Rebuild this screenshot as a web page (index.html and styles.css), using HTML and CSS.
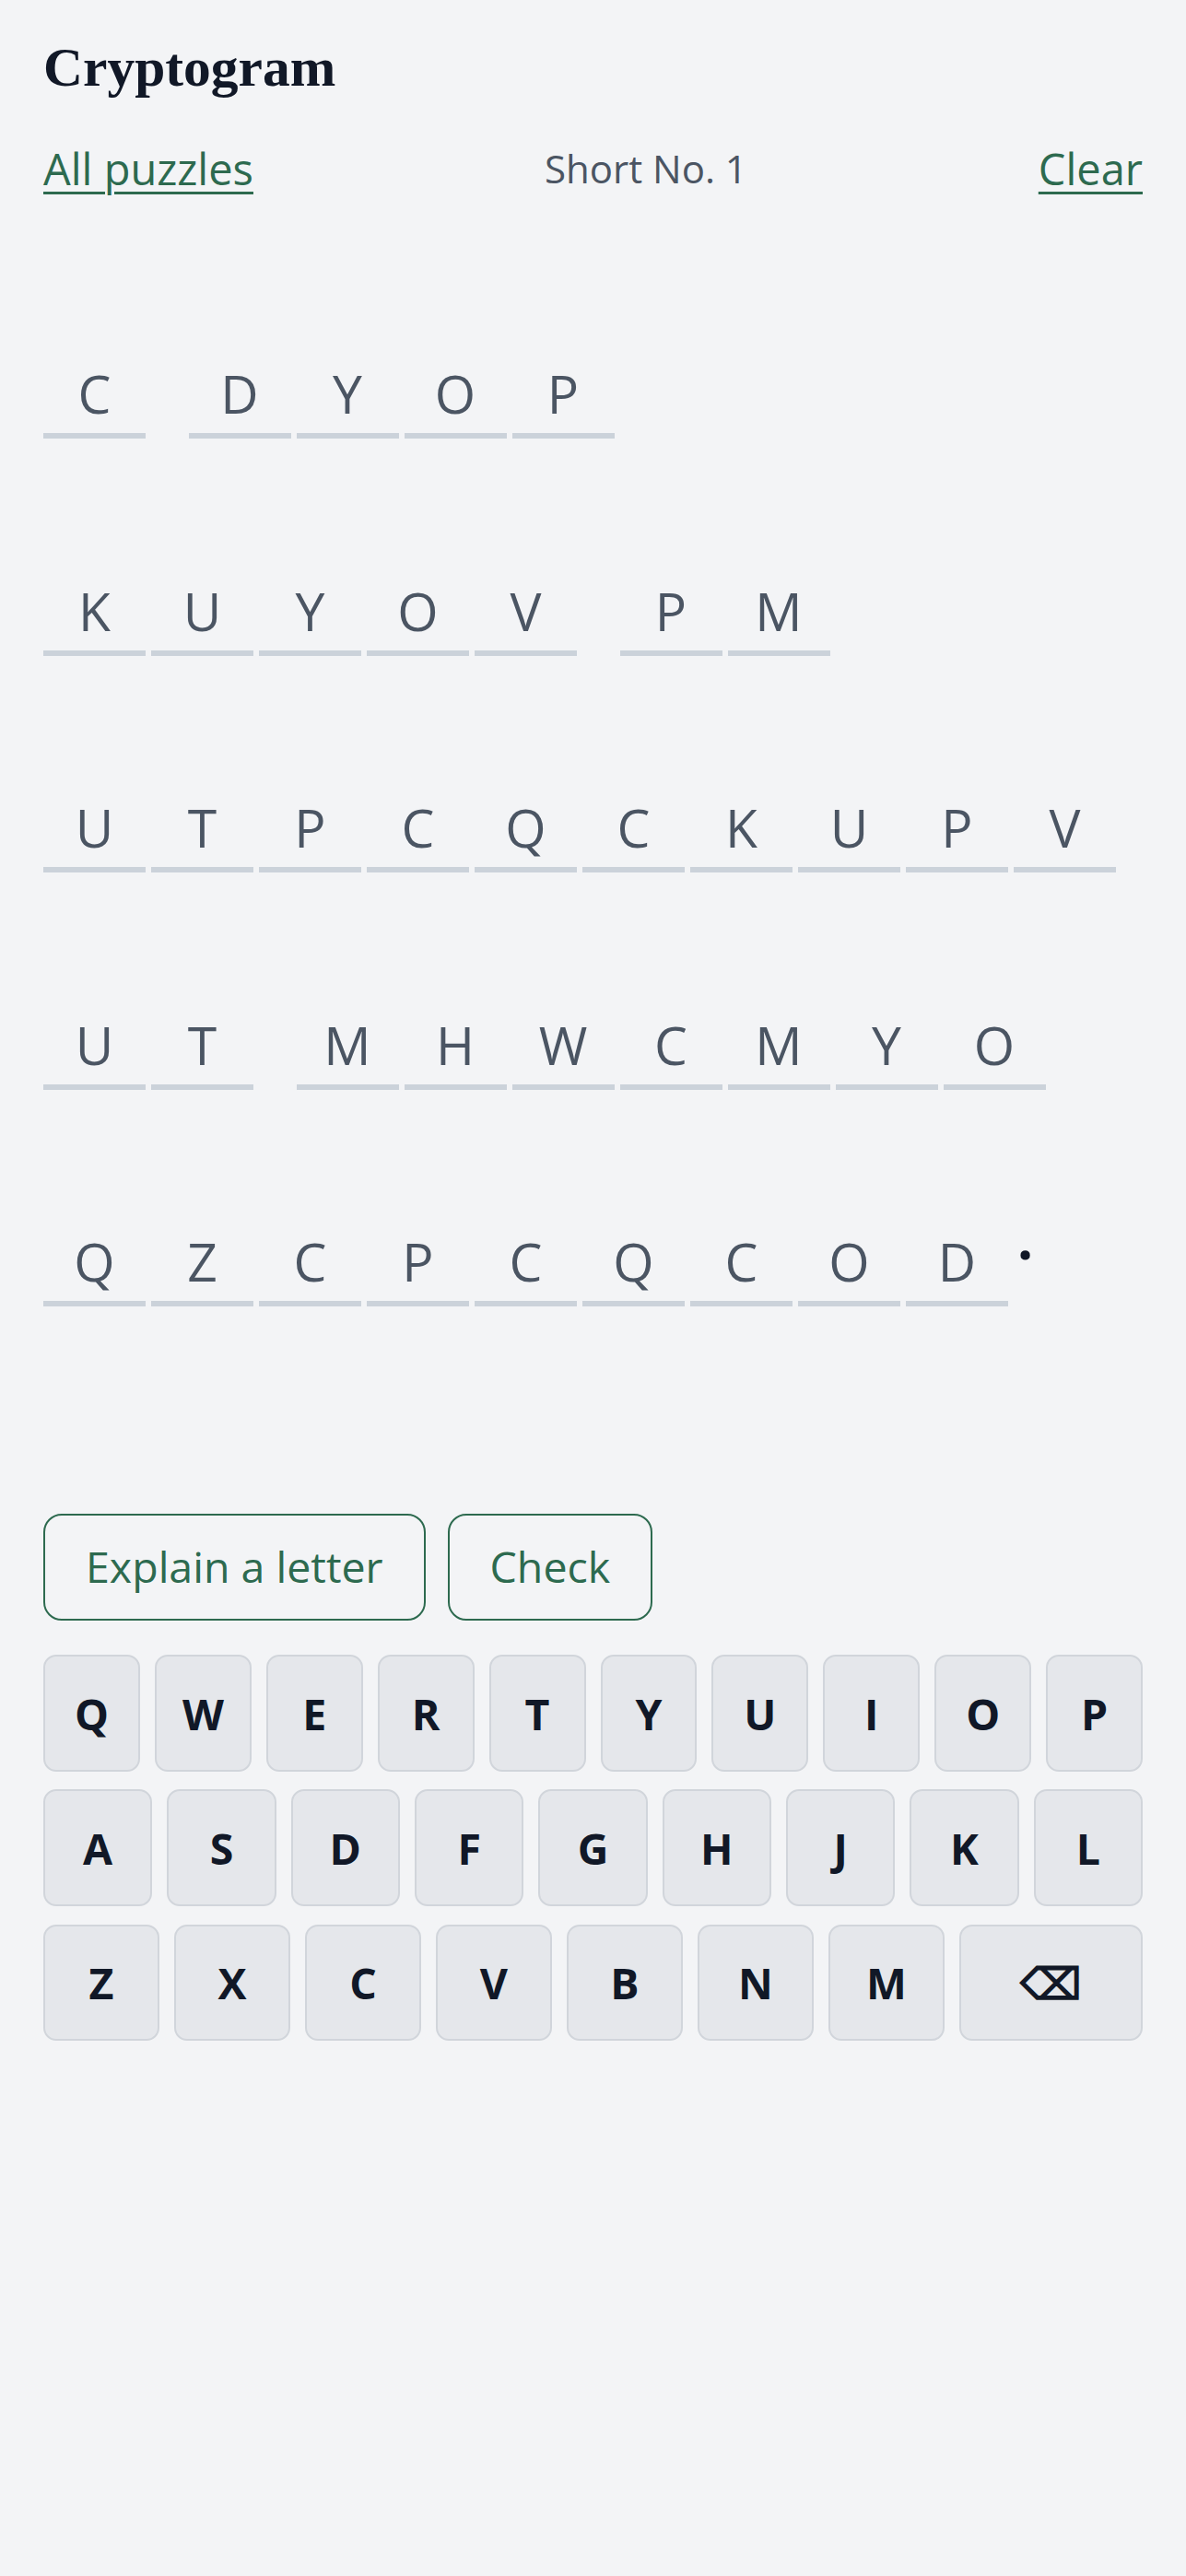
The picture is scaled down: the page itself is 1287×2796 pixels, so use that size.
FILE: index.html
```html
<!DOCTYPE html>
<html lang="en">
<head>
    <meta charset="UTF-8">
    <meta name="viewport" content="width=device-width, initial-scale=1.0">
    <title>Cryptogram</title>
    <link rel="stylesheet" href="styles.css">
</head>
<body>
    <div class="page">
        <h1 class="title">Cryptogram</h1>

        <nav class="topbar">
            <a href="#" class="link">All puzzles</a>
            <span class="meta">Short No. 1</span>
            <a href="#" class="link">Clear</a>
        </nav>

        <div class="puzzle">
            <div class="word">
                <div class="cell"><span class="guess"></span><span class="cipher">C</span></div>
            </div>
            <div class="word">
                <div class="cell"><span class="guess"></span><span class="cipher">D</span></div>
                <div class="cell"><span class="guess"></span><span class="cipher">Y</span></div>
                <div class="cell"><span class="guess"></span><span class="cipher">O</span></div>
                <div class="cell"><span class="guess"></span><span class="cipher">P</span></div>
            </div>
            <div class="word">
                <div class="cell"><span class="guess"></span><span class="cipher">K</span></div>
                <div class="cell"><span class="guess"></span><span class="cipher">U</span></div>
                <div class="cell"><span class="guess"></span><span class="cipher">Y</span></div>
                <div class="cell"><span class="guess"></span><span class="cipher">O</span></div>
                <div class="cell"><span class="guess"></span><span class="cipher">V</span></div>
            </div>
            <div class="word">
                <div class="cell"><span class="guess"></span><span class="cipher">P</span></div>
                <div class="cell"><span class="guess"></span><span class="cipher">M</span></div>
            </div>
            <div class="word">
                <div class="cell"><span class="guess"></span><span class="cipher">U</span></div>
                <div class="cell"><span class="guess"></span><span class="cipher">T</span></div>
                <div class="cell"><span class="guess"></span><span class="cipher">P</span></div>
                <div class="cell"><span class="guess"></span><span class="cipher">C</span></div>
                <div class="cell"><span class="guess"></span><span class="cipher">Q</span></div>
                <div class="cell"><span class="guess"></span><span class="cipher">C</span></div>
                <div class="cell"><span class="guess"></span><span class="cipher">K</span></div>
                <div class="cell"><span class="guess"></span><span class="cipher">U</span></div>
                <div class="cell"><span class="guess"></span><span class="cipher">P</span></div>
                <div class="cell"><span class="guess"></span><span class="cipher">V</span></div>
            </div>
            <div class="word">
                <div class="cell"><span class="guess"></span><span class="cipher">U</span></div>
                <div class="cell"><span class="guess"></span><span class="cipher">T</span></div>
            </div>
            <div class="word">
                <div class="cell"><span class="guess"></span><span class="cipher">M</span></div>
                <div class="cell"><span class="guess"></span><span class="cipher">H</span></div>
                <div class="cell"><span class="guess"></span><span class="cipher">W</span></div>
                <div class="cell"><span class="guess"></span><span class="cipher">C</span></div>
                <div class="cell"><span class="guess"></span><span class="cipher">M</span></div>
                <div class="cell"><span class="guess"></span><span class="cipher">Y</span></div>
                <div class="cell"><span class="guess"></span><span class="cipher">O</span></div>
            </div>
            <div class="word">
                <div class="cell"><span class="guess"></span><span class="cipher">Q</span></div>
                <div class="cell"><span class="guess"></span><span class="cipher">Z</span></div>
                <div class="cell"><span class="guess"></span><span class="cipher">C</span></div>
                <div class="cell"><span class="guess"></span><span class="cipher">P</span></div>
                <div class="cell"><span class="guess"></span><span class="cipher">C</span></div>
                <div class="cell"><span class="guess"></span><span class="cipher">Q</span></div>
                <div class="cell"><span class="guess"></span><span class="cipher">C</span></div>
                <div class="cell"><span class="guess"></span><span class="cipher">O</span></div>
                <div class="cell"><span class="guess"></span><span class="cipher">D</span></div>
                <span class="punct">.</span>
            </div>
        </div>

        <div class="actions">
            <button class="btn">Explain a letter</button>
            <button class="btn">Check</button>
        </div>

        <div class="keyboard">
            <div class="krow">
                <button class="key">Q</button>
                <button class="key">W</button>
                <button class="key">E</button>
                <button class="key">R</button>
                <button class="key">T</button>
                <button class="key">Y</button>
                <button class="key">U</button>
                <button class="key">I</button>
                <button class="key">O</button>
                <button class="key">P</button>
            </div>
            <div class="krow">
                <button class="key">A</button>
                <button class="key">S</button>
                <button class="key">D</button>
                <button class="key">F</button>
                <button class="key">G</button>
                <button class="key">H</button>
                <button class="key">J</button>
                <button class="key">K</button>
                <button class="key">L</button>
            </div>
            <div class="krow">
                <button class="key">Z</button>
                <button class="key">X</button>
                <button class="key">C</button>
                <button class="key">V</button>
                <button class="key">B</button>
                <button class="key">N</button>
                <button class="key">M</button>
                <button class="key key-wide">⌫</button>
            </div>
        </div>
    </div>
</body>
</html>
```

FILE: styles.css
```css
body {
    margin: 0;
    background-color: #f3f4f6;
    font-family: "Open Sans", "Noto Sans", sans-serif;
    font-size: 46.5px;
    color: #111827;
}
.page {
    padding: 38px 47px;
}
.title {
    margin: 0;
    font-family: "Liberation Serif", serif;
    font-weight: bold;
    font-size: 59.5px;
    line-height: 1.2;
    color: #111827;
}
.topbar {
    margin-top: 39px;
    height: 70px;
    display: flex;
    justify-content: space-between;
    align-items: center;
    line-height: 70px;
}
.link {
    font-size: 47px;
    color: #2d6a4f;
    text-decoration: underline;
    text-decoration-thickness: 3px;
    text-underline-offset: 7px;
}
.meta {
    font-size: 42px;
    color: #4b5563;
}
.puzzle {
    margin-top: 69px;
    display: flex;
    flex-wrap: wrap;
    gap: 46.5px;
}
.word {
    display: flex;
    gap: 6px;
}
.cell {
    width: 111px;
    display: flex;
    flex-direction: column;
    align-items: center;
}
.guess {
    height: 100px;
}
.cipher {
    align-self: stretch;
    text-align: center;
    font-size: 57px;
    line-height: 80px;
    padding-bottom: 3px;
    border-bottom: 6px solid #cbd2da;
    color: #4b5563;
}
.punct {
    align-self: flex-end;
    margin-left: 4px;
    margin-bottom: 34px;
    font-size: 60px;
    font-weight: 700;
    line-height: 80px;
    color: #111827;
}
.actions {
    margin-top: 225px;
    display: flex;
    gap: 24px;
}
.btn {
    font-family: inherit;
    font-size: 46.5px;
    line-height: 1.5;
    padding: 20.8px 44px;
    background: transparent;
    color: #2d6a4f;
    border: 2px solid #2d6a4f;
    border-radius: 20px;
}
.keyboard {
    margin-top: 37.5px;
    display: flex;
    flex-direction: column;
    gap: 19.5px;
}
.krow {
    display: flex;
    gap: 16px;
}
.key {
    flex: 1 1 0;
    height: 126.7px;
    padding: 0;
    font-family: inherit;
    font-size: 46.5px;
    font-weight: 700;
    color: #111827;
    background-color: #e5e7eb;
    border: 2px solid #d1d5db;
    border-radius: 14px;
}
.key-wide {
    flex-grow: 1.6;
}
```
